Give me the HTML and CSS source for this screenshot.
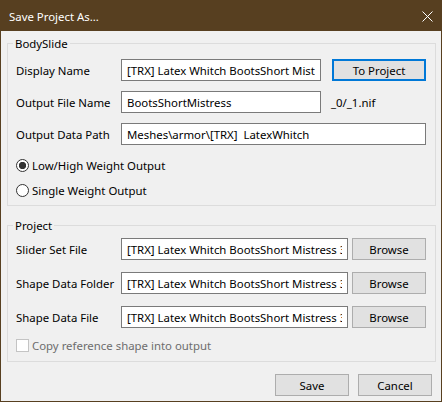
FILE: index.html
```html
<!DOCTYPE html>
<html lang="en">
<head>
  <meta charset="UTF-8" />
  <title>Save Project As...</title>
  <link rel="stylesheet" href="styles.css">
</head>
<body>
  <div class="window">
    <div class="titlebar">
      <span class="title">Save Project As...</span>
      <svg class="close" width="11" height="11" viewBox="0 0 11 11">
        <path d="M0.5 0.5 L10.5 10.5 M10.5 0.5 L0.5 10.5" stroke="#fff" stroke-width="1" fill="none" />
      </svg>
    </div>

    <div class="content">
      <fieldset class="group group-bodyslide">
        <legend>BodySlide</legend>
        <div class="row">
          <label class="field-label" for="displayName">Display Name</label>
          <input class="field field-short" id="displayName" type="text" value="[TRX] Latex Whitch BootsShort Mistress 3BA" />
          <button class="btn btn-default">To Project</button>
        </div>
        <div class="row">
          <label class="field-label" for="outputFile">Output File Name</label>
          <input class="field field-short" id="outputFile" type="text" value="BootsShortMistress" />
          <span class="suffix">_0/_1.nif</span>
        </div>
        <div class="row">
          <label class="field-label" for="outputPath">Output Data Path</label>
          <input class="field field-wide" id="outputPath" type="text" value="Meshes\armor\[TRX]  LatexWhitch" />
        </div>
        <label class="option option-first">
          <input class="radio" type="radio" name="weight" checked />
          Low/High Weight Output
        </label>
        <label class="option">
          <input class="radio" type="radio" name="weight" />
          Single Weight Output
        </label>
      </fieldset>

      <fieldset class="group group-project">
        <legend>Project</legend>
        <div class="row row-project">
          <label class="field-label" for="sliderSet">Slider Set File</label>
          <input class="field field-mid" id="sliderSet" type="text" value="[TRX] Latex Whitch BootsShort Mistress 3BA.osp" />
          <button class="btn btn-browse">Browse</button>
        </div>
        <div class="row row-project">
          <label class="field-label" for="shapeFolder">Shape Data Folder</label>
          <input class="field field-mid" id="shapeFolder" type="text" value="[TRX] Latex Whitch BootsShort Mistress 3BA" />
          <button class="btn btn-browse">Browse</button>
        </div>
        <div class="row row-project">
          <label class="field-label" for="shapeFile">Shape Data File</label>
          <input class="field field-mid" id="shapeFile" type="text" value="[TRX] Latex Whitch BootsShort Mistress 3BA.nif" />
          <button class="btn btn-browse">Browse</button>
        </div>
        <label class="option option-check">
          <input class="check" type="checkbox" disabled />
          Copy reference shape into output
        </label>
      </fieldset>
    </div>

    <div class="footer">
      <button class="btn btn-footer">Save</button>
      <button class="btn btn-footer">Cancel</button>
    </div>
  </div>
</body>
</html>
```

FILE: styles.css
```css
* {
  box-sizing: border-box;
}

body {
  margin: 0;
  font-family: "Segoe UI", "Noto Sans", sans-serif;
  font-size: 11.4px;
  color: #000;
  background: #f0f0f0;
}

.window {
  width: 442px;
  height: 402px;
  border: 1px solid #573f20;
  border-top: none;
  background: #f0f0f0;
  display: flex;
  flex-direction: column;
}

.titlebar {
  height: 31px;
  background: #573f20;
  color: #fff;
  display: flex;
  align-items: center;
  justify-content: space-between;
  padding: 1px 8px 0 8px;
}

.content {
  padding: 5px 5px 0 6px;
}

.group {
  margin: 0;
  padding: 8px 9px 2px 8px;
  border: 1px solid #dcdcdc;
  min-width: 0;
}

.group legend {
  padding: 0 2px;
  margin-left: -3px;
  line-height: 15px;
}

.group-project {
  margin-top: 12px;
  padding-top: 5px;
  padding-bottom: 5px;
}

.row {
  display: flex;
  align-items: center;
  height: 22px;
}

.row + .row {
  margin-top: 10px;
}

.row-project + .row-project {
  margin-top: 12px;
}

.field-label {
  width: 105px;
  flex-shrink: 0;
}

.field {
  height: 22px;
  border: 1px solid #7a7a7a;
  background: #fff;
  padding: 0 5px;
  font: inherit;
  color: #000;
  margin: 0;
  outline: none;
}

.field-short {
  width: 200px;
}

.field-wide {
  width: 305px;
}

.field-mid {
  width: 227px;
}

.suffix {
  margin-left: 10px;
}

.btn {
  height: 22px;
  border: 1px solid #adadad;
  background: #e1e1e1;
  font: inherit;
  color: #000;
  padding: 0;
  margin: 0;
}

.btn-default {
  width: 94px;
  margin-left: 11px;
  border: 2px solid #0078d7;
}

.btn-browse {
  width: 74px;
  margin-left: 4px;
}

.option {
  display: flex;
  align-items: center;
  gap: 3px;
  height: 25px;
}

.option-first {
  margin-top: 8px;
}

.radio {
  appearance: none;
  width: 13px;
  height: 13px;
  margin: 0;
  border: 1px solid #333;
  border-radius: 50%;
  background: #fff;
}

.radio:checked {
  background: radial-gradient(circle, #333 0, #333 3.4px, #fff 3.9px);
}

.option-check {
  height: 22px;
  margin-top: 6px;
  color: #6d6d6d;
}

.check {
  appearance: none;
  width: 13px;
  height: 13px;
  margin: 0;
  border: 1px solid #c4c4c4;
  background: #fff;
}

.footer {
  display: flex;
  justify-content: flex-end;
  gap: 9px;
  margin-top: 12px;
  padding-right: 9px;
}

.btn-footer {
  width: 74px;
}
```
